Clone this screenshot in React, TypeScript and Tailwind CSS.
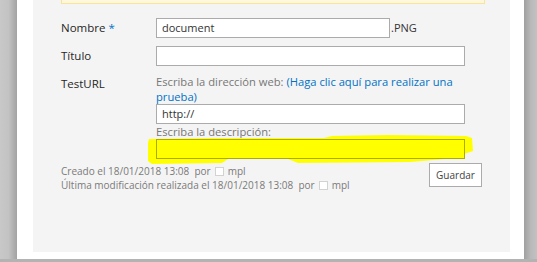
import React from "react";

const Presence = () => (
  <span className="mx-[4px] inline-block h-[9px] w-[9px] border border-[#d2d2d2] bg-white align-[-1px]" />
);

const App = () => {
  return (
    <div className="flex h-[262px] w-[537px] flex-col overflow-hidden bg-[#bdbdbd] font-['Open_Sans',sans-serif]">
      <div className="flex flex-1">
        <div className="w-[17px] bg-gradient-to-r from-[#c8c8c8] via-[#c3c3c3] to-[#a2a2a2]" />
        <div className="flex w-[507px] flex-col bg-white pb-[7px] pl-[16px] pr-[14px]">
          <div className="flex-1 bg-[#f4f4f4] pl-[28px] pr-[25px]">
            {/* cut off banner */}
            <div className="h-[4px] border-x border-b border-[#fbe39b] bg-[#fff8dc]" />

            {/* Nombre */}
            <div className="mt-[14px] flex">
              <div className="w-[95px] pt-[1px] text-[11.5px] leading-[18px] text-[#262626]">
                Nombre <span className="text-[#0072c6]">*</span>
              </div>
              <div className="flex items-center">
                <div className="h-[20px] w-[234px] border border-[#ababab] bg-white px-[5px] text-[11px] leading-[18px] text-[#333]">
                  document
                </div>
                <span className="ml-[1px] text-[11px] leading-[18px] text-[#333]">.PNG</span>
              </div>
            </div>

            {/* Título */}
            <div className="mt-[8px] flex">
              <div className="w-[95px] pt-[1px] text-[11.5px] leading-[18px] text-[#262626]">Título</div>
              <div className="h-[20px] w-[309px] border border-[#ababab] bg-white" />
            </div>

            {/* TestURL */}
            <div className="mt-[8px] flex">
              <div className="w-[95px] pt-[1px] text-[11.5px] leading-[18px] text-[#262626]">TestURL</div>
              <div className="w-[322px]">
                <div className="text-[11.2px] leading-[15px] text-[#777]">
                  Escriba la dirección web:{" "}
                  <span className="text-[#0072c6]">(Haga clic aquí para realizar una prueba)</span>
                </div>
                <div className="h-[20px] w-[309px] border border-[#ababab] bg-white px-[5px] text-[11px] leading-[18px] text-[#333]">
                  http://
                </div>
                <div className="text-[11.2px] leading-[15px] text-[#777]">Escriba la descripción:</div>
                <div className="relative h-[20px] w-[309px]">
                  <svg
                    className="absolute left-[-8px] top-[-4px]"
                    width="326"
                    height="29"
                    viewBox="0 0 326 29"
                  >
                    <path
                      d="M1 4 L60 3 L176 3 L184 1 L240 0 L318 1 L324 3 L325 16 L316 19 L304 22 L296 24 L262 27 L150 28 L140 24 L80 24 L74 28 L4 29 L0 26 L0 8 Z"
                      fill="#ffff00"
                    />
                  </svg>
                  <div className="relative h-[20px] w-[309px] border border-[#abab00] bg-[#ffff00]" />
                </div>
              </div>
            </div>

            {/* footer */}
            <div className="mt-[4px] flex justify-between">
              <div className="text-[10px] leading-[14px] text-[#7a7a7a]">
                <div className="pt-[1px]">
                  Creado el 18/01/2018 13:08&nbsp;&nbsp;por
                  <Presence />
                  mpl
                </div>
                <div>
                  Última modificación realizada el 18/01/2018 13:08&nbsp;&nbsp;por
                  <Presence />
                  mpl
                </div>
              </div>
              <button className="mr-[3px] h-[24px] w-[53px] border border-[#ababab] bg-white text-[10px] text-[#444]">
                Guardar
              </button>
            </div>
          </div>
        </div>
        <div className="w-[13px] bg-gradient-to-r from-[#a0a0a0] via-[#b8b8b8] to-[#c2c2c2]" />
      </div>
      <div className="h-[3px] bg-[#b3b3b3]" />
    </div>
  );
};

export default App;
